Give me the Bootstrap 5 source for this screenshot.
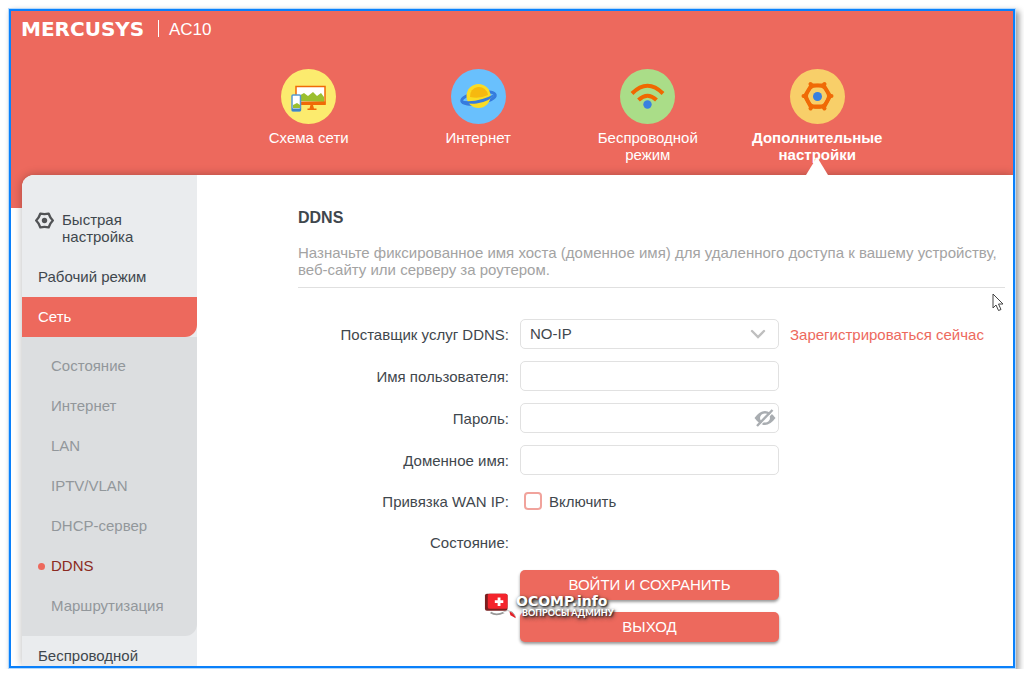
<!DOCTYPE html>
<html lang="ru">
<head>
<meta charset="utf-8">
<meta name="viewport" content="width=device-width, initial-scale=1">
<title>MERCUSYS AC10 — DDNS</title>
<link href="https://cdn.jsdelivr.net/npm/bootstrap@5.3.0/dist/css/bootstrap.min.css" rel="stylesheet">
<style>
  :root { --brand: #ed695d; --ink: #3f474d; }
  body { font-family: "Liberation Sans", Arial, sans-serif; font-size: 15px; line-height: 17px; color: var(--ink); background: #fff; }
  .app-frame { margin: 8px 8px 0; min-height: calc(100vh - 17px); border: 3px solid #0a80fa; outline: 1px solid #b5d9fb;
    outline-offset: -1px; box-shadow: 3px 3px 6px rgba(0,0,0,.4); background: linear-gradient(var(--brand) 197px, #fff 0); }
  .brand-bar { height: 58px; padding: 8px 10px; color: #fff; }
  .brand-logo { font: bold 20px/20px "DejaVu Sans", sans-serif; width: 137px; color: #fff; text-decoration: none; }
  .brand-model { border-left: 1px solid #fff; height: 17px; padding-left: 10px; margin-top: 1px; font-size: 17px; line-height: 19px; }
  .main-tabs { height: 106px; padding: 0 111px 0 213px; position: relative; z-index: 1; }
  .main-tabs a { color: #fff; text-decoration: none; display: block; position: relative; height: 106px; text-align: center; }
  .main-tabs svg { display: block; margin: 0 auto 5px; }
  .main-tabs a.active::after { content: ""; position: absolute; z-index: 2; bottom: 0; left: 50%; margin-left: -11px;
    border: 11px solid transparent; border-top: 0; border-bottom: 18px solid #fff; }
  .panel { margin-left: 11px; border-radius: 12px 0 0 0; background: #fff; box-shadow: 0 0 10px rgba(0,0,0,.28); clip-path: inset(-12px 0 0 -12px); }
  .side { width: 175px; flex: none; background: #eaecee; border-radius: 12px 0 0 0; padding-top: 36px; }
  .side a { display: block; color: var(--ink); text-decoration: none; line-height: 40px; padding-left: 16px; }
  .side a.quick { display: flex; line-height: 17px; padding-left: 13px; margin-bottom: 12px; }
  .side a.open { background: var(--brand); color: #fff; border-bottom-right-radius: 12px; }
  .side a.last { line-height: 20px; padding-top: 10px; }
  .sub-bg { border-bottom-right-radius: 12px; background: #dcdee0; padding: 9px 0 10px; }
  .sub-bg a { color: #92979b; padding-left: 29px; }
  .sub-bg a.current { color: #8b2a22; position: relative; }
  .sub-bg a.current::before { content: ""; position: absolute; left: 16px; top: 17px; width: 7px; height: 7px; border-radius: 50%; background: var(--brand); }
  .page { padding: 34px 8px 0 101px; min-width: 0; }
  .page h1 { font-size: 16px; line-height: 18px; font-weight: bold; margin-bottom: 17px; }
  .hint { color: #a3a3a3; padding-bottom: 9px; margin-bottom: 31px; border-bottom: 1px solid #e0e0e0; }
  .field-row { display: grid; grid-template-columns: 211px 259px auto; column-gap: 11px; align-items: center; min-height: 30px; margin-bottom: 12px; }
  .field-row.check-row { min-height: 28px; }
  .field-row > :first-child { text-align: right; }
  .field-row .form-control, .field-row .form-select { height: 30px; padding: 0 9px; border: 1px solid #e1e1e1; border-radius: 5px; font-size: 15px; line-height: 28px; color: var(--ink); }
  .field-row .form-select { background-image: url("data:image/svg+xml,%3Csvg xmlns='http://www.w3.org/2000/svg' viewBox='0 0 16 10'%3E%3Cpath d='M2 2l6 6 6-6' fill='none' stroke='%23bfbfbf' stroke-width='2.4' stroke-linecap='round'/%3E%3C/svg%3E"); background-size: 16px 10px; background-position: right 12px center; }
  .eye-btn { position: absolute; right: 3px; top: 5px; padding: 0; border: 0; background: none; line-height: 0; }
  .form-check-input.wan { width: 18px; height: 18px; margin: 0 7px 0 4px; border: 2px solid #f1a39c; border-radius: 4px; }
  .reg-link { color: var(--brand); text-decoration: none; white-space: nowrap; }
  .btn-brand { width: 259px; height: 30px; padding: 0; margin-left: 222px; margin-bottom: 12px; font-size: 15px; line-height: 30px; color: #fff; background: var(--brand); border: 0; border-radius: 5px; box-shadow: 0 2px 3px rgba(0,0,0,.4); }
  .actions { position: relative; padding-top: 1px; }
  .site-mark { position: absolute; left: 186px; top: 21px; display: flex; color: #fff; text-shadow: 1px 1px 2px #222, 1px 2px 4px #333; }
  .site-mark b { display: block; font: italic 900 15px/16px Lato, sans-serif; margin-top: 4px; }
  .site-mark b { font: bold 14px/14px "DejaVu Sans", sans-serif; }
  .site-mark i { display: block; font: normal 900 9px/10px Lato, sans-serif; margin-left: 6px; }
  .pointer { position: absolute; right: 9px; top: 118px; }
</style>
</head>
<body>
<div class="app-frame">
  <header>
    <div class="brand-bar d-flex align-items-start">
      <a class="brand-logo" href="#">MERCUSYS</a>
      <span class="brand-model">AC10</span>
    </div>
    <nav class="main-tabs row gx-0 m-0" aria-label="Разделы">
      <a class="col-3" href="#">
        <svg width="55" height="55" viewBox="0 0 55 55"><circle cx="27.500" cy="27.500" r="27.500" fill="#fceb6e"/>
          <rect x="15" y="17.500" width="29" height="17.500" fill="#fff" stroke="#f06a06" stroke-width="1.500"/>
          <path d="M16 32v-4l7-4 4 3 5-4 4 4 4-3 3 4v5z" fill="#9bbf2e"/><path d="M14.500 32.500h30v3.500h-12.500l1 3.500h2.500v1.500h-9v-1.500h2l1-3.500h-15z" fill="#f06a06"/>
          <rect x="11" y="26" width="8.500" height="16" rx="1" fill="#fff" stroke="#5599cf" stroke-width="1.500"/><path d="M12 39v-3l4-2 3 2v3z" fill="#9bbf2e"/><path d="M11 39.500h9V42h-9z" fill="#4185c4"/></svg>Схема сети</a>
      <a class="col-3" href="#">
        <svg width="55" height="55" viewBox="0 0 55 55"><circle cx="27.500" cy="27.500" r="27.500" fill="#69c0fd"/>
          <ellipse cx="27.500" cy="29" rx="17" ry="5.500" transform="rotate(-10 27.500 29)" fill="none" stroke="#367bdd" stroke-width="3"/>
          <circle cx="27.500" cy="27" r="12" fill="#fadc25"/><path d="M19 28a9 9 0 1 1 18-2q-8 4-18 2" fill="#f6b90f"/>
          <path d="M10 31.500q16 3 34.500-7-5 8-19 10-12 1-15.500-3" fill="#367bdd"/></svg>Интернет</a>
      <a class="col-3" href="#">
        <svg width="55" height="55" viewBox="0 0 55 55"><circle cx="27.500" cy="27.500" r="27.500" fill="#aadd88"/>
          <path d="M12 24.500q15.500-15.500 31 0M18.500 31q9-8.500 18 0" fill="none" stroke="#f06800" stroke-width="4"/><circle cx="27.500" cy="35.500" r="4.200" fill="#3980e0"/></svg>Беспроводной<br>режим</a>
      <a class="col-3 active fw-bold" href="#" aria-current="page">
        <svg width="55" height="55" viewBox="0 0 55 55"><circle cx="27.500" cy="27.500" r="27.500" fill="#f8cf69"/>
          <path fill="none" stroke="#f06a06" stroke-width="4" stroke-linecap="round" stroke-linejoin="round" d="M20.500 15L22 16.500H33L34.500 15M34 17L40 27M41.500 27H40L34 38M34.500 39.500L33 37.500H22L20.500 39.500M21 38L15 27H13.500M15 27L21 17"/>
          <circle cx="27.500" cy="27.300" r="11" fill="none" stroke="#f06a06" stroke-width="3"/><circle cx="27.500" cy="27.500" r="4.500" fill="#3980e0"/></svg>Дополнительные<br>настройки</a>
    </nav>
  </header>
  <div class="panel d-flex position-relative">
    <nav class="side" aria-label="Настройки">
      <a class="quick" href="#"><svg class="me-2" width="19" height="19" viewBox="0 0 32 32" fill="none" stroke="#515355"><path d="M9 4.500Q16 6 23 4.500 25 11 30 16 25 21 23 27.500 16 26 9 27.500 7 21 2 16 7 11 9 4.500Z" stroke-width="4" stroke-linejoin="round"/><circle cx="16" cy="16" r="4.500" fill="#515355" stroke="none"/></svg><span>Быстрая<br>настройка</span></a>
      <a href="#">Рабочий режим</a>
      <a class="open" href="#">Сеть</a>
      <div class="sub-bg">
        <a href="#">Состояние</a>
        <a href="#">Интернет</a>
        <a href="#">LAN</a>
        <a href="#">IPTV/VLAN</a>
        <a href="#">DHCP-сервер</a>
        <a class="current" href="#" aria-current="page">DDNS</a>
        <a href="#">Маршрутизация</a>
      </div>
      <a class="last" href="#">Беспроводной</a>
    </nav>
    <main class="page flex-grow-1">
      <h1>DDNS</h1>
      <p class="hint">Назначьте фиксированное имя хоста (доменное имя) для удаленного доступа к вашему устройству, веб-сайту или серверу за роутером.</p>
      <form>
        <div class="field-row"><label for="provider">Поставщик услуг DDNS:</label>
          <select class="form-select" id="provider"><option>NO-IP</option></select>
          <a class="reg-link" href="#">Зарегистрироваться сейчас</a></div>
        <div class="field-row"><label for="user">Имя пользователя:</label><input class="form-control" id="user" type="text"></div>
        <div class="field-row"><label for="pass">Пароль:</label>
          <div class="position-relative"><input class="form-control" id="pass" type="password">
            <button class="eye-btn" type="button" aria-label="Показать пароль"><svg width="22" height="20" viewBox="0 0 22 20"><path d="M.500 10Q11-4 21.500 10 11 24 .500 10z" fill="#a9adb1"/><ellipse cx="11" cy="10" rx="5" ry="4.500" fill="#fff"/><path d="M4.500 18.500L19.500 3.500" stroke="#fff" stroke-width="1.500"/><path d="M3 18L18.500 2" stroke="#a9adb1" stroke-width="2.400"/></svg></button></div></div>
        <div class="field-row"><label for="domain">Доменное имя:</label><input class="form-control" id="domain" type="text"></div>
        <div class="field-row check-row"><label for="wan">Привязка WAN IP:</label>
          <div class="d-flex align-items-center"><input class="form-check-input wan" id="wan" type="checkbox"><label for="wan">Включить</label></div></div>
        <div class="field-row"><span>Состояние:</span></div>
        <div class="actions">
          <button class="btn btn-brand d-block" type="submit">ВОЙТИ И СОХРАНИТЬ</button>
          <button class="btn btn-brand d-block" type="button">ВЫХОД</button>
          <div class="site-mark">
            <svg width="32" height="30" viewBox="0 0 34 30"><rect x="1" y="3" width="24" height="18" rx="2" fill="#7a2020"/><rect x="4" y="3" width="21" height="16" rx="2" fill="#f4242c"/><path d="M11.500 10h3V7h3v3h3v3h-3v3h-3v-3h-3z" fill="#fff"/><path d="M7 23q6 4 14 0 8-4 12 5" fill="none" stroke="#999" stroke-width="2"/><path d="M20 23q7-5 14 5-7-3-14-5" fill="#fff"/><path d="M27 22q5 2 7 7l-6-3z" fill="#e31f27"/></svg>
            <span><b>OCOMP.info</b><i>ВОПРОСЫ АДМИНУ</i></span>
          </div>
        </div>
      </form>
    </main>
    <svg class="pointer" width="12" height="20" viewBox="0 0 12 20" aria-hidden="true"><path d="M1 1v14l3-3 2.500 5.500 2.500-1L6.500 11H11z" fill="#fff" stroke="#444" stroke-width="1"/></svg>
  </div>
</div>
<script src="https://cdn.jsdelivr.net/npm/bootstrap@5.3.0/dist/js/bootstrap.bundle.min.js"></script>
</body>
</html>
